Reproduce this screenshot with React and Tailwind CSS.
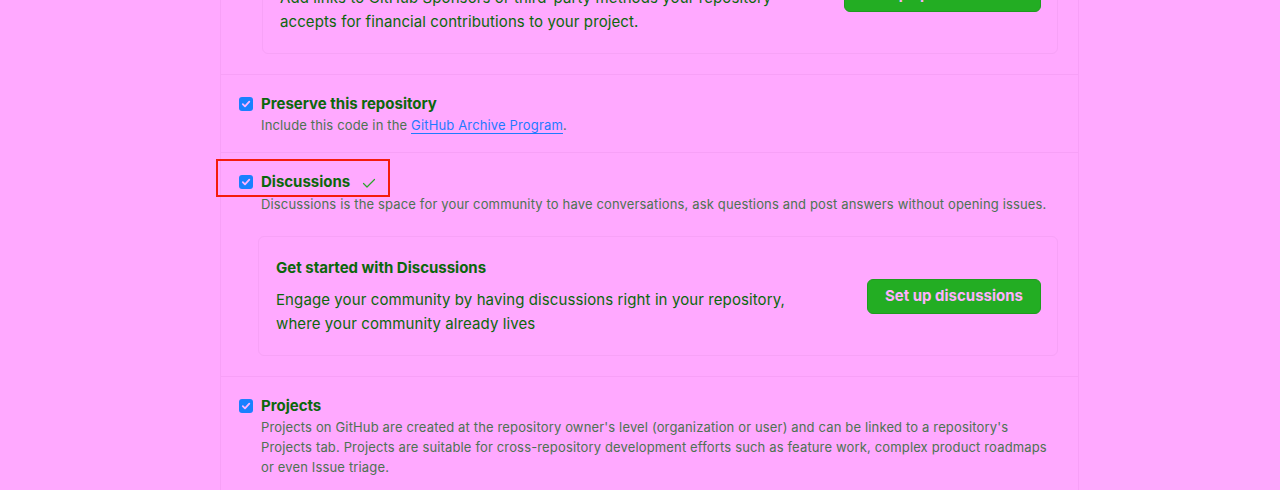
import React from 'react';

const Checkbox = () => (
    <span className="flex h-[14px] w-[14px] shrink-0 items-center justify-center rounded-[3px] bg-[#1a80ff]">
        <svg width="10" height="10" viewBox="0 0 10 10" fill="none">
            <path d="M1.8 5.2 L4 7.4 L8.3 2.6" stroke="#ffb4ff" strokeWidth="1.8" strokeLinecap="round" strokeLinejoin="round" />
        </svg>
    </span>
);

const PromoBox = ({ title, text, button, className }) => (
    <div className={`flex h-[120px] items-center justify-between rounded-md border border-[#f7a2f7] pl-[17px] pr-[16px] ${className}`}>
        <div className="w-[540px]">
            <div className="text-[15px] font-bold leading-[22px] text-[#0b670b]">{title}</div>
            <p className="mt-[9px] text-[15px] leading-6 tracking-[0.1px] text-[#0b670b]">{text}</p>
        </div>
        <button className="h-[35px] rounded-md border border-[#1f9b1f] bg-[#23ad23] px-[17px] text-[15px] font-bold text-[#ffb0ff]">
            {button}
        </button>
    </div>
);

const Title = ({ children }) => (
    <span className="text-[15px] font-bold leading-[22px] text-[#0b670b]">{children}</span>
);

export default function App() {
    return (
        <div className="h-[490px] w-[1280px] overflow-hidden bg-[#ffa9ff]" style={{ fontFamily: 'Inter, "Noto Sans", sans-serif' }}>
            <div className="ml-[220px] mt-[-66px] w-[859px] border-l border-r border-[#f7a0f7]">
                <div className="pb-5 pl-[41px] pr-5">
                    <PromoBox
                        title="Sponsorships"
                        text="Add links to GitHub Sponsors or third-party methods your repository accepts for financial contributions to your project."
                        button="Set up sponsor button"
                        className="w-[796px]"
                    />
                </div>

                <div className="border-t border-[#f7a0f7] pt-[18px] pb-[17px] pl-[18px] pr-5">
                    <div className="flex h-[22px] items-center gap-[8px]">
                        <Checkbox />
                        <Title>Preserve this repository</Title>
                    </div>
                    <div className="pl-[22px] text-[13px] leading-5 tracking-[0.15px] text-[#4d7352]">
                        Include this code in the{' '}
                        <a href="#" className="border-b border-[#1f7aff] text-[#1f7aff]">GitHub Archive Program</a>.
                    </div>
                </div>

                <div className="border-t border-[#f7a0f7] pt-[18px] pb-5">
                    <div className="pl-[18px] pr-5">
                        <div className="relative flex h-[22px] items-center gap-[8px]">
                            <Checkbox />
                            <Title>Discussions</Title>
                            <svg width="16" height="16" viewBox="0 0 16 16" className="ml-[3px] mt-[2px]" fill="none">
                                <path d="M2.5 8.5 L6 12 L13.5 4.5" stroke="#2aa52a" strokeWidth="1.2" strokeLinecap="round" strokeLinejoin="round" />
                            </svg>
                            <span className="absolute left-[-23px] top-[-12px] h-[38px] w-[174px] border-2 border-[#f51c0c]" />
                        </div>
                        <div className="mt-[1px] pl-[22px] text-[13px] leading-5 tracking-[0.15px] text-[#4d7352]">
                            Discussions is the space for your community to have conversations, ask questions and post answers without opening issues.
                        </div>
                    </div>
                    <div className="mt-[22px] pl-[37px] pr-5">
                        <PromoBox
                            title="Get started with Discussions"
                            text="Engage your community by having discussions right in your repository, where your community already lives"
                            button="Set up discussions"
                            className="w-[800px]"
                        />
                    </div>
                </div>

                <div className="border-t border-[#f7a0f7] pt-[18px] pb-6 pl-[18px] pr-5">
                    <div className="flex h-[22px] items-center gap-[8px]">
                        <Checkbox />
                        <Title>Projects</Title>
                    </div>
                    <div className="pl-[22px] text-[13px] leading-5 tracking-[0.15px] text-[#4d7352]">
                        Projects on GitHub are created at the repository owner's level (organization or user) and can be linked to a repository's Projects tab. Projects are suitable for cross-repository development efforts such as feature work, complex product roadmaps or even Issue triage.
                    </div>
                </div>
            </div>
        </div>
    );
}
